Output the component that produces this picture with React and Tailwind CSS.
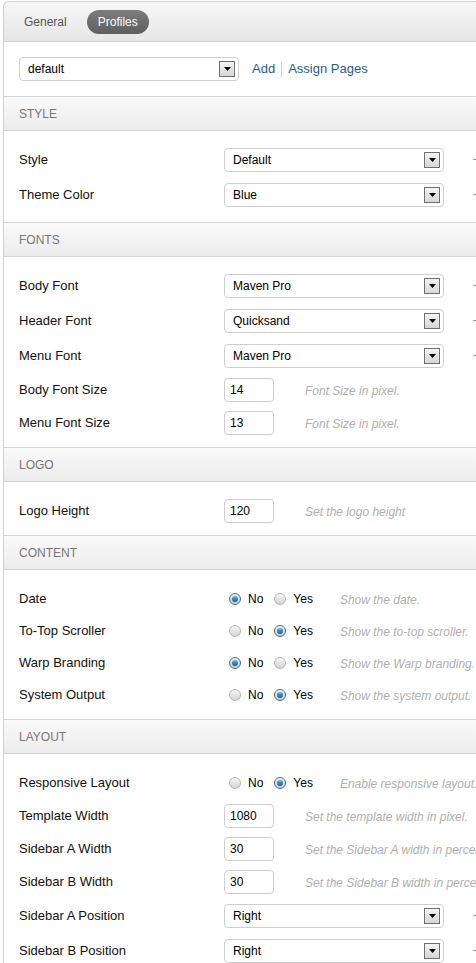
import React from "react";

const font = { fontFamily: '"Liberation Sans", Arial, sans-serif' };

// fake windows-style select box
const Select = ({ value }) => (
  <div className="flex h-[24px] w-[220px] items-center justify-between rounded-[4px] border border-[#cfcfcf] bg-white pl-[8px] pr-[3px] text-[12px] text-black">
    <span>{value}</span>
    <span className="flex h-[16px] w-[16px] items-center justify-center border border-[#707070] bg-gradient-to-b from-[#f4f4f4] to-[#d6d6d6]">
      <svg width="7" height="4" viewBox="0 0 7 4">
        <path d="M0 0h7L3.5 4z" fill="#000" />
      </svg>
    </span>
  </div>
);

const TextInput = ({ value }) => (
  <div className="flex h-[24px] w-[50px] items-center rounded-[4px] border border-[#cfcfcf] bg-white pl-[5px] text-[12px] text-black">
    {value}
  </div>
);

const Radio = ({ checked }) => (
  <span
    className={`relative inline-flex h-[12px] w-[12px] items-center justify-center rounded-full border ${
      checked
        ? "border-[#5a6b7a] bg-gradient-to-b from-[#eef2f5] to-[#c3ccd3]"
        : "border-[#b5b5b5] bg-gradient-to-b from-[#f7f7f7] to-[#d4d4d4]"
    }`}
  >
    {checked && (
      <span className="h-[6px] w-[6px] rounded-full bg-gradient-to-b from-[#5fb6ec] to-[#0b5c9c]" />
    )}
  </span>
);

const YesNo = ({ yes }) => (
  <div className="flex items-center text-[12px] text-black">
    <Radio checked={!yes} />
    <span className="ml-[7px]">No</span>
    <span className="ml-[11px] flex">
      <Radio checked={yes} />
    </span>
    <span className="ml-[7px]">Yes</span>
  </div>
);

const Hint = ({ children }) => (
  <span className="whitespace-nowrap text-[12px] italic text-[#b0b0b0]">{children}</span>
);

const Row = ({ label, h, children, tip }) => (
  <div className={`flex items-center ${h}`}>
    <div className="w-[220px] shrink-0 pl-[15px] text-[13px] text-[#111]">{label}</div>
    <div className="flex items-center">{children}</div>
    {tip && <span className="ml-[29px] h-[1px] w-[3px] bg-[#999]" />}
  </div>
);

const Header = ({ title }) => (
  <div className="flex h-[35px] items-center border-y border-[#d4d4d4] bg-gradient-to-b from-[#fafafa] to-[#ececec] pl-[15px] text-[12px] text-[#777]">
    {title}
  </div>
);

const SelectRow = ({ label, value }) => (
  <Row label={label} h="h-[35px]" tip>
    <Select value={value} />
  </Row>
);

const InputRow = ({ label, value, hint }) => (
  <Row label={label} h="h-[33px]">
    <TextInput value={value} />
    <span className="ml-[31px]">
      <Hint>{hint}</Hint>
    </span>
  </Row>
);

const RadioRow = ({ label, yes, hint }) => (
  <Row label={label} h="h-[32px]">
    <div className="ml-[5px]">
      <YesNo yes={yes} />
    </div>
    <span className="ml-[27px]">
      <Hint>{hint}</Hint>
    </span>
  </Row>
);

export default function App() {
  return (
    <div className="h-[963px] w-[476px] overflow-hidden bg-white" style={font}>
      <div className="ml-[3px] mt-[1px] w-[560px] rounded-tl-[6px] border-l border-t border-[#d0d0d0]">
        {/* tabs */}
        <div className="flex h-[40px] items-center gap-[20px] rounded-tl-[6px] border-b border-[#cfcfcf] bg-gradient-to-b from-[#f7f7f7] to-[#e6e6e6] pl-[20px] text-[12px]">
          <span className="text-[#555]">General</span>
          <span className="rounded-full bg-gradient-to-b from-[#7d7d7d] to-[#5e5e5e] px-[11px] py-[3px] text-white">
            Profiles
          </span>
        </div>

        {/* profile picker */}
        <div className="flex items-center pb-[15px] pl-[15px] pt-[15px] text-[13px]">
          <Select value="default" />
          <span className="ml-[13px] text-[#1d5f8c]">Add</span>
          <span className="mx-[6px] h-[15px] w-[1px] bg-[#d0d0d0]" />
          <span className="text-[#1d5f8c]">Assign Pages</span>
        </div>

        <Header title="STYLE" />
        <div className="pb-[10px] pt-[11px]">
          <SelectRow label="Style" value="Default" />
          <SelectRow label="Theme Color" value="Blue" />
        </div>

        <Header title="FONTS" />
        <div className="pb-[8px] pt-[11px]">
          <SelectRow label="Body Font" value="Maven Pro" />
          <SelectRow label="Header Font" value="Quicksand" />
          <SelectRow label="Menu Font" value="Maven Pro" />
          <InputRow label="Body Font Size" value="14" hint="Font Size in pixel." />
          <InputRow label="Menu Font Size" value="13" hint="Font Size in pixel." />
        </div>

        <Header title="LOGO" />
        <div className="pb-[8px] pt-[12px]">
          <InputRow label="Logo Height" value="120" hint="Set the logo height" />
        </div>

        <Header title="CONTENT" />
        <div className="pb-[8px] pt-[13px]">
          <RadioRow label="Date" yes={false} hint="Show the date." />
          <RadioRow label="To-Top Scroller" yes hint="Show the to-top scroller." />
          <RadioRow label="Warp Branding" yes={false} hint="Show the Warp branding." />
          <RadioRow label="System Output" yes hint="Show the system output." />
        </div>

        <Header title="LAYOUT" />
        <div className="pt-[13px]">
          <RadioRow label="Responsive Layout" yes hint="Enable responsive layout." />
          <InputRow label="Template Width" value="1080" hint="Set the template width in pixel." />
          <InputRow label="Sidebar A Width" value="30" hint="Set the Sidebar A width in percent." />
          <InputRow label="Sidebar B Width" value="30" hint="Set the Sidebar B width in percent." />
          <SelectRow label="Sidebar A Position" value="Right" />
          <SelectRow label="Sidebar B Position" value="Right" />
        </div>
      </div>
    </div>
  );
}
